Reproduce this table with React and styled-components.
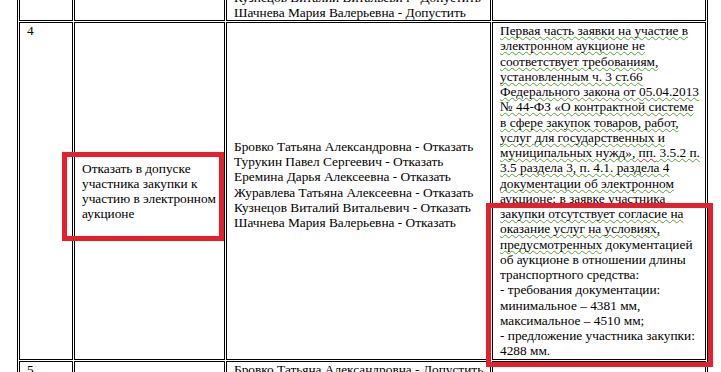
import React from "react"
import styled, { createGlobalStyle } from "styled-components"

const GlobalStyle = createGlobalStyle`
  html, body {
    margin: 0;
    padding: 0;
    background: #fff;
  }
  body {
    font-family: "Liberation Serif", "Times New Roman", serif;
  }
`

// Whole visible sheet, clipped to the window
const Page = styled.div`
  position: relative;
  width: 721px;
  height: 372px;
  overflow: hidden;
  padding-left: 17px;
  box-sizing: border-box;
  background: #fff;
`

// Word style table with double lines
const Table = styled.table`
  margin-top: -75px;
  border-collapse: separate;
  border-spacing: 1px;
  border: 1px solid #000;
  table-layout: fixed;
  width: 691px;
  font-family: "Liberation Serif", "Times New Roman", serif;
  font-size: 13.33px;
  line-height: 15.25px;
  color: #000;
`

const Row = styled.tr`
  height: ${p => p.$h}px;
`

const Cell = styled.td`
  box-sizing: border-box;
  width: ${p => (p.$w ? `${p.$w}px` : "auto")};
  border: 1px solid #000;
  padding: 0 7px ${p => p.$pb || 0}px;
  vertical-align: ${p => p.$va || "top"};
  white-space: nowrap;
  font-family: "Liberation Serif", "Times New Roman", serif;
`

const Line = styled.div`
  white-space: nowrap;
`

// spell / grammar marks from the word processor
const Mark = styled.span`
  text-decoration-line: underline;
  text-decoration-style: wavy;
  text-decoration-color: ${p => p.$c || "#58a02c"};
  text-decoration-thickness: 1px;
  text-underline-offset: 1px;
  text-decoration-skip-ink: none;
`

// red highlight frames drawn over the screenshot
const Frame = styled.div`
  position: absolute;
  box-sizing: border-box;
  border: 5px solid #e3202b;
  left: ${p => p.$x}px;
  top: ${p => p.$y}px;
  width: ${p => p.$w}px;
  height: ${p => p.$h}px;
  pointer-events: none;
`

const people = [
  "Бровко Татьяна Александровна",
  "Турукин Павел Сергеевич",
  "Еремина Дарья Алексеевна",
  "Журавлева Татьяна Алексеевна",
  "Кузнецов Виталий Витальевич ",
  "Шачнева Мария Валерьевна",
]

const reason = [
  "Первая часть заявки на участие в",
  "электронном аукционе не",
  "соответствует требованиям,",
  "установленным ч. 3 ст.66",
  "Федерального закона от 05.04.2013",
  "№ 44-ФЗ «О контрактной системе",
  "в сфере закупок товаров, работ,",
  "услуг для государственных и",
  null,
  "3.5 раздела 3, п. 4.1. раздела 4",
  "документации об электронном",
  "аукционе; в заявке участника",
  "закупки отсутствует согласие на",
  "оказание услуг на условиях,",
]

const tail = [
  "об аукционе в отношении длины",
  "транспортного средства:",
  "- требования документации:",
  "минимальное – 4381 мм,",
  "максимальное – 4510 мм;",
  "- предложение участника закупки:",
  "4288 мм.",
]

export default function App() {
  return (
    <Page>
      <GlobalStyle />
      <Table>
        <tbody>
          <Row $h={94}>
            <Cell $w={54} />
            <Cell $w={151} />
            <Cell $w={265} $va="bottom">
              {people.map(n => (
                <Line key={n}>{n} - Допустить</Line>
              ))}
            </Cell>
            <Cell $w={214} />
          </Row>
          <Row $h={338}>
            <Cell>4</Cell>
            <Cell $va="middle">
              <Line>Отказать в допуске</Line>
              <Line>участника закупки к</Line>
              <Line>участию в электронном</Line>
              <Line>аукционе</Line>
            </Cell>
            <Cell $va="middle" $pb={13}>
              {people.map(n => (
                <Line key={n}>{n} - Отказать</Line>
              ))}
            </Cell>
            <Cell>
              {reason.map((t, i) =>
                t === null ? (
                  <Line key={i}>
                    <Mark>муниципальных нужд», </Mark>
                    <Mark $c="#e0262b">пп.</Mark>
                    <Mark> 3.5.2 п.</Mark>
                  </Line>
                ) : (
                  <Line key={i}>
                    <Mark>{t}</Mark>
                  </Line>
                )
              )}
              <Line>
                <Mark>предусмотренных</Mark> документацией
              </Line>
              {tail.map(t => (
                <Line key={t}>{t}</Line>
              ))}
            </Cell>
          </Row>
          <Row $h={60}>
            <Cell>5</Cell>
            <Cell />
            <Cell>
              <Line>Бровко Татьяна Александровна - Допустить</Line>
            </Cell>
            <Cell />
          </Row>
        </tbody>
      </Table>
      <Frame $x={62} $y={152} $w={162} $h={89} />
      <Frame $x={486} $y={203} $w={227} $h={164} />
    </Page>
  )
}
